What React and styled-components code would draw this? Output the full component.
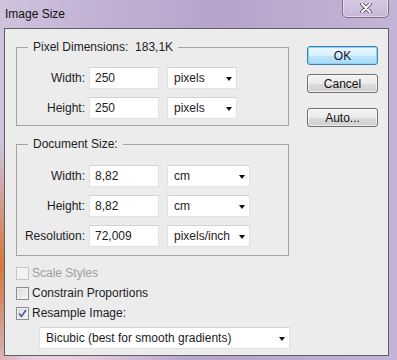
import React from "react";
import styled, { createGlobalStyle } from "styled-components";

const GlobalStyle = createGlobalStyle`
  html, body {
    margin: 0;
    padding: 0;
    background: #b9a6cc;
  }
  body {
    font-family: "Liberation Sans", Arial, sans-serif;
    font-size: 12px;
    color: #1c1c24;
  }
`;

const Frame = styled.div`
  width: 397px;
  height: 360px;
  display: flex;
  flex-direction: column;
  box-sizing: border-box;
  overflow: hidden;
  background:
    radial-gradient(ellipse 40px 120px at 0px 265px, rgba(214, 112, 48, 0.95), rgba(214, 112, 48, 0) 100%),
    radial-gradient(ellipse 120px 14px at 60px 360px, rgba(246, 210, 225, 0.9), rgba(246, 210, 225, 0) 100%),
    linear-gradient(90deg, #cfc3dd 0%, #c2b1d4 25%, #b7a3ca 55%, #c4b4d5 100%);
`;

const TitleBar = styled.div`
  height: 28px;
  display: flex;
  justify-content: space-between;
  align-items: flex-start;
  padding-left: 5px;
  box-sizing: border-box;
`;

const Title = styled.div`
  margin-top: 7px;
  font-size: 12px;
  line-height: 14px;
  color: #111;
`;

const CloseButton = styled.div`
  width: 47px;
  height: 19px;
  margin-top: -1px;
  margin-right: 8px;
  box-sizing: border-box;
  border: 1px solid #7d6f8c;
  border-top: none;
  border-radius: 0 0 5px 5px;
  background: linear-gradient(#d6cbe2, #c6b8d6);
  box-shadow: inset 0 0 0 1px rgba(255, 255, 255, 0.45);
  display: flex;
  align-items: center;
  justify-content: center;
`;

const Client = styled.div`
  flex: 1;
  margin: 0 8px 4px 4px;
  border: 1px solid #5f5f66;
  background: #ececec;
  display: flex;
`;

const LeftCol = styled.div`
  width: 273px;
  margin-left: 11px;
  display: flex;
  flex-direction: column;
`;

const Group = styled.fieldset`
  margin: ${({ $top }) => $top}px 0 0 0;
  padding: ${({ $pt }) => $pt}px 0 ${({ $pb }) => $pb}px 0;
  border: 1px solid #a3a3a3;
  min-width: 0;
  display: flex;
  flex-direction: column;
  gap: 8px;
`;

const Legend = styled.legend`
  margin-left: 11px;
  padding: 0 5px;
  line-height: 14px;
  font-size: 12px;
  white-space: pre;
`;

const Row = styled.div`
  display: flex;
  align-items: center;
  height: 22px;
`;

const Label = styled.div`
  width: 68px;
  margin-right: 4px;
  text-align: right;
`;

const Field = styled.div`
  width: 70px;
  height: 22px;
  box-sizing: border-box;
  border: 1px solid #e1e1e1;
  border-top-color: #d2d2d2;
  background: #fff;
  padding-left: 5px;
  display: flex;
  align-items: center;
  margin-right: 8px;
`;

const Select = styled.div`
  width: ${({ $w }) => $w}px;
  height: 22px;
  box-sizing: border-box;
  border: 1px solid #e1e1e1;
  border-top-color: #d2d2d2;
  background: #fff;
  padding: 0 4px 0 6px;
  display: flex;
  align-items: center;
  justify-content: space-between;
  margin-left: ${({ $ml }) => $ml || 0}px;
  margin-top: ${({ $mt }) => $mt || 0}px;
`;

const Arrow = styled.span`
  width: 0;
  height: 0;
  border-left: 3.5px solid transparent;
  border-right: 3.5px solid transparent;
  border-top: 4px solid #111;
  margin-top: 1px;
`;

const Checks = styled.div`
  margin-top: 10px;
  display: flex;
  flex-direction: column;
  gap: 6px;
`;

const CheckRow = styled.div`
  display: flex;
  align-items: center;
  height: 14px;
  color: ${({ $disabled }) => ($disabled ? "#9e9e9e" : "#1c1c24")};
`;

const Box = styled.div`
  width: 13px;
  height: 13px;
  box-sizing: border-box;
  border: 1px solid ${({ $disabled }) => ($disabled ? "#c4c4c4" : "#8e8f8f")};
  background: ${({ $disabled }) =>
    $disabled ? "#f2f2f2" : "linear-gradient(135deg, #d8d8d8, #f8f8f8)"};
  box-shadow: inset 0 0 0 1px ${({ $disabled }) => ($disabled ? "#f4f4f4" : "#f0f0f0")};
  margin-right: 3px;
  display: flex;
  align-items: center;
  justify-content: center;
`;

const ButtonCol = styled.div`
  margin-left: 18px;
  padding-top: 17px;
  display: flex;
  flex-direction: column;
`;

const Button = styled.div`
  width: 71px;
  height: 19px;
  box-sizing: border-box;
  border: 1px solid ${({ $primary }) => ($primary ? "#3c7fb1" : "#707070")};
  border-radius: 3px;
  background: ${({ $primary }) =>
    $primary
      ? "linear-gradient(#eaf6fd 0%, #d9f0fc 50%, #bee6fd 51%, #a7d9f5 100%)"
      : "linear-gradient(#f2f2f2 0%, #ebebeb 50%, #dddddd 51%, #cfcfcf 100%)"};
  box-shadow: inset 0 0 0 1px ${({ $primary }) => ($primary ? "#8fd3f5" : "rgba(255,255,255,0.6)")};
  display: flex;
  align-items: center;
  justify-content: center;
  margin-top: ${({ $mt }) => $mt || 0}px;
  color: #111;
`;

const unitRow = (label, value, unit, w) => (
  <Row key={label}>
    <Label>{label}</Label>
    <Field>{value}</Field>
    <Select $w={w}>
      <span>{unit}</span>
      <Arrow />
    </Select>
  </Row>
);

const Check = () => (
  <svg width="9" height="9" viewBox="0 0 9 9">
    <path d="M1 4.5 L3.5 7.5 L8 1" fill="none" stroke="#4a5d96" strokeWidth="1.6" />
  </svg>
);

export default function App() {
  return (
    <Frame>
      <GlobalStyle />
      <TitleBar>
        <Title>Image Size</Title>
        <CloseButton>
          <svg width="12" height="10" viewBox="0 0 12 10">
            <path d="M2 1 L10 9 M10 1 L2 9" stroke="#4b4358" strokeWidth="3.6" strokeLinecap="round" />
            <path d="M2 1 L10 9 M10 1 L2 9" stroke="#ffffff" strokeWidth="2" strokeLinecap="round" />
          </svg>
        </CloseButton>
      </TitleBar>
      <Client>
        <LeftCol>
          <Group $top={11} $pt={13} $pb={6}>
            <Legend>Pixel Dimensions:  183,1K</Legend>
            {unitRow("Width:", "250", "pixels", 70)}
            {unitRow("Height:", "250", "pixels", 70)}
          </Group>
          <Group $top={11} $pt={14} $pb={8}>
            <Legend>Document Size:</Legend>
            {unitRow("Width:", "8,82", "cm", 83)}
            {unitRow("Height:", "8,82", "cm", 83)}
            {unitRow("Resolution:", "72,009", "pixels/inch", 83)}
          </Group>
          <Checks>
            <CheckRow $disabled>
              <Box $disabled />
              Scale Styles
            </CheckRow>
            <CheckRow>
              <Box />
              Constrain Proportions
            </CheckRow>
            <CheckRow>
              <Box>
                <Check />
              </Box>
              Resample Image:
            </CheckRow>
          </Checks>
          <Select $w={251} $ml={23} $mt={7}>
            <span>Bicubic (best for smooth gradients)</span>
            <Arrow />
          </Select>
        </LeftCol>
        <ButtonCol>
          <Button $primary>OK</Button>
          <Button $mt={9}>Cancel</Button>
          <Button $mt={15}>Auto...</Button>
        </ButtonCol>
      </Client>
    </Frame>
  );
}
